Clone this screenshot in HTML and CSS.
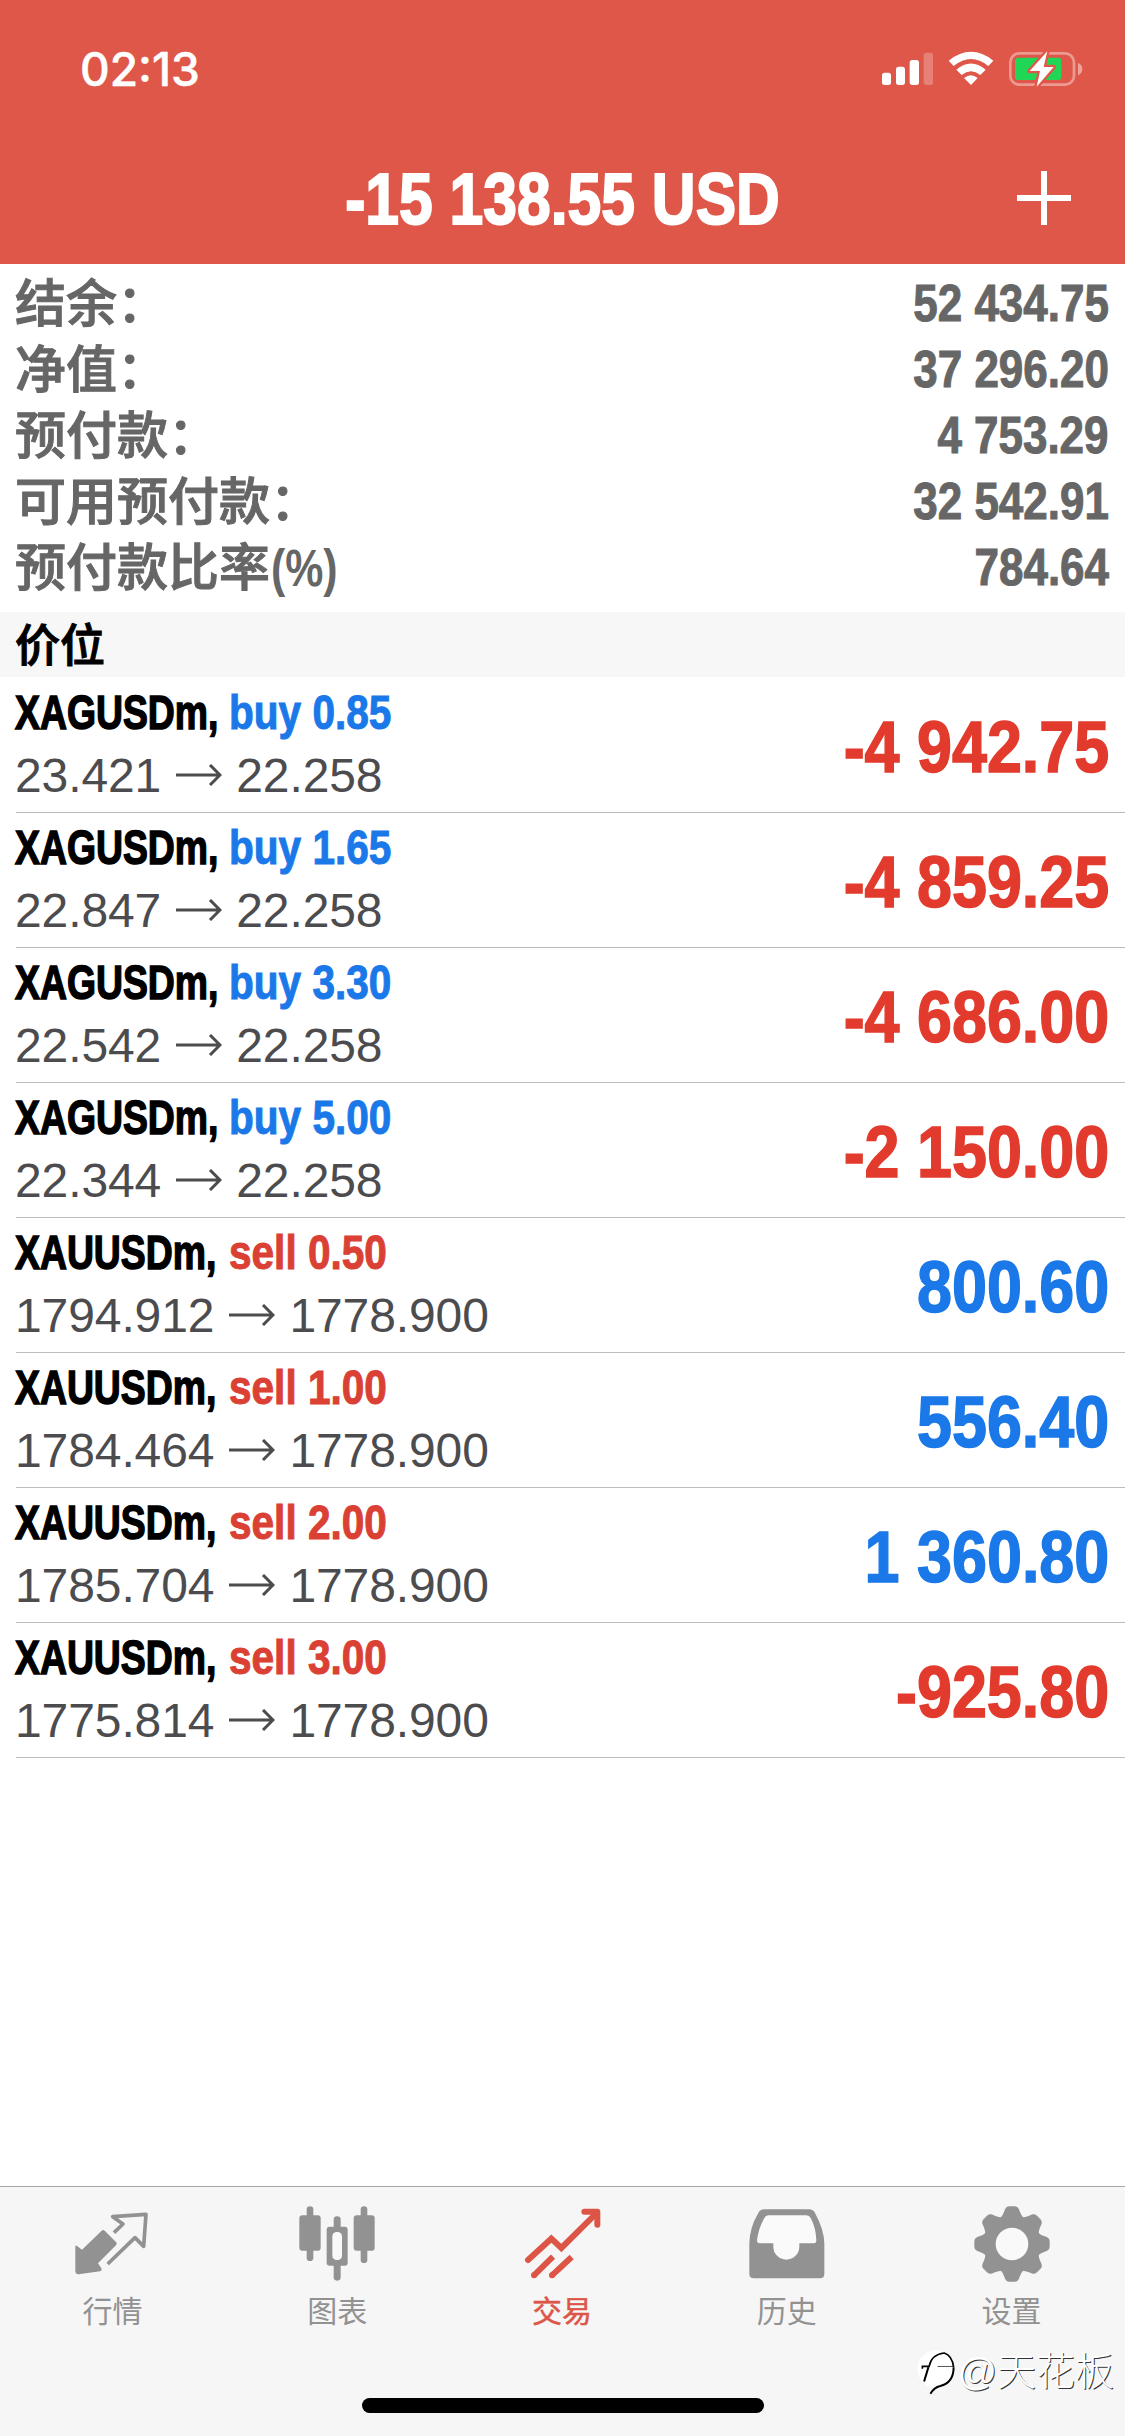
FILE: index.html
```html
<!DOCTYPE html>
<html lang="zh-CN">
<head>
    <meta charset="UTF-8">
    <meta name="viewport" content="width=device-width, initial-scale=1.0">
    <title>交易</title>
    <link rel="stylesheet" href="styles.css">
</head>
<body>
    <header class="header">
        <!-- Status bar -->
        <div class="status-bar">
            <span class="clock">02:13</span>
            <svg class="status-icons" viewBox="120 90 612 114">
                <g fill="#fff">
                    <rect x="126" y="158" width="27" height="37" rx="8"/>
                    <rect x="168" y="140" width="27" height="55" rx="8"/>
                    <rect x="209" y="120" width="28" height="75" rx="8"/>
                    <rect x="251" y="98" width="28" height="97" rx="8" opacity=".25"/>
                    <path d="M326 122Q393 69 460 122L445 138Q393 96 341 138Z"/>
                    <path d="M349 149Q393 112 437 149L421 165Q393 143 365 165Z"/>
                    <path d="M372 174Q393 158 413 174L393 195Z"/>
                </g>
                <rect x="511" y="100" width="191" height="94" rx="27" fill="none" stroke="#fff" stroke-opacity=".4" stroke-width="8"/>
                <path d="M714 128Q727 134 727 147Q727 160 714 166Z" fill="#fff" fill-opacity=".45"/>
                <rect x="525" y="113" width="139" height="67" rx="10" fill="#1fd655"/>
                <path d="M622 94L569 153H600L590 200L641 141H611Z" fill="#fff" stroke="#df5749" stroke-width="14" stroke-linejoin="round" paint-order="stroke"/>
            </svg>
        </div>
        <div class="title-bar">
            <h1>-15 138.55 USD</h1>
            <button class="add-btn">
                <svg viewBox="0 0 54 54"><path d="M27 0V54M0 27H54" stroke="#fff" stroke-width="6"/></svg>
            </button>
        </div>
    </header>

    <!-- Account summary -->
    <section class="summary">
        <div class="summary-row"><span class="label">结余：</span><span class="value">52 434.75</span></div>
        <div class="summary-row"><span class="label">净值：</span><span class="value">37 296.20</span></div>
        <div class="summary-row"><span class="label">预付款：</span><span class="value">4 753.29</span></div>
        <div class="summary-row"><span class="label">可用预付款：</span><span class="value">32 542.91</span></div>
        <div class="summary-row"><span class="label">预付款比率<span class="unit">(%)</span></span><span class="value">784.64</span></div>
    </section>

    <h2 class="section-title">价位</h2>

    <!-- Open positions -->
    <main class="positions">
        <div class="position">
            <div class="info">
                <div class="deal"><span class="symbol">XAGUSDm,</span><span class="side buy">buy 0.85</span></div>
                <div class="price">23.421<svg class="arrow" viewBox="0 0 46 22"><path d="M0 11H44M34 1L44 11L34 21"/></svg>22.258</div>
            </div>
            <div class="profit loss">-4 942.75</div>
        </div>
        <div class="position">
            <div class="info">
                <div class="deal"><span class="symbol">XAGUSDm,</span><span class="side buy">buy 1.65</span></div>
                <div class="price">22.847<svg class="arrow" viewBox="0 0 46 22"><path d="M0 11H44M34 1L44 11L34 21"/></svg>22.258</div>
            </div>
            <div class="profit loss">-4 859.25</div>
        </div>
        <div class="position">
            <div class="info">
                <div class="deal"><span class="symbol">XAGUSDm,</span><span class="side buy">buy 3.30</span></div>
                <div class="price">22.542<svg class="arrow" viewBox="0 0 46 22"><path d="M0 11H44M34 1L44 11L34 21"/></svg>22.258</div>
            </div>
            <div class="profit loss">-4 686.00</div>
        </div>
        <div class="position">
            <div class="info">
                <div class="deal"><span class="symbol">XAGUSDm,</span><span class="side buy">buy 5.00</span></div>
                <div class="price">22.344<svg class="arrow" viewBox="0 0 46 22"><path d="M0 11H44M34 1L44 11L34 21"/></svg>22.258</div>
            </div>
            <div class="profit loss">-2 150.00</div>
        </div>
        <div class="position">
            <div class="info">
                <div class="deal"><span class="symbol">XAUUSDm,</span><span class="side sell">sell 0.50</span></div>
                <div class="price">1794.912<svg class="arrow" viewBox="0 0 46 22"><path d="M0 11H44M34 1L44 11L34 21"/></svg>1778.900</div>
            </div>
            <div class="profit">800.60</div>
        </div>
        <div class="position">
            <div class="info">
                <div class="deal"><span class="symbol">XAUUSDm,</span><span class="side sell">sell 1.00</span></div>
                <div class="price">1784.464<svg class="arrow" viewBox="0 0 46 22"><path d="M0 11H44M34 1L44 11L34 21"/></svg>1778.900</div>
            </div>
            <div class="profit">556.40</div>
        </div>
        <div class="position">
            <div class="info">
                <div class="deal"><span class="symbol">XAUUSDm,</span><span class="side sell">sell 2.00</span></div>
                <div class="price">1785.704<svg class="arrow" viewBox="0 0 46 22"><path d="M0 11H44M34 1L44 11L34 21"/></svg>1778.900</div>
            </div>
            <div class="profit">1 360.80</div>
        </div>
        <div class="position">
            <div class="info">
                <div class="deal"><span class="symbol">XAUUSDm,</span><span class="side sell">sell 3.00</span></div>
                <div class="price">1775.814<svg class="arrow" viewBox="0 0 46 22"><path d="M0 11H44M34 1L44 11L34 21"/></svg>1778.900</div>
            </div>
            <div class="profit loss">-925.80</div>
        </div>
    </main>

    <!-- Bottom tabs -->
    <footer class="footer">
        <nav class="tabs">
            <a class="tab">
                <svg viewBox="0 0 240 240">
                    <path d="M10 128Q10 122 15 126L30 137L89 80Q94 76 99 81L132 114Q137 119 132 124L78 178L88 193Q91 200 84 202L20 211Q10 211 10 202Z" fill="#929292"/>
                    <path d="M126 86L153 60L122 38L222 31L215 127L189 101L107 180" fill="none" stroke="#929292" stroke-width="11" stroke-linejoin="round"/>
                </svg>
                <span>行情</span>
            </a>
            <a class="tab">
                <svg viewBox="0 0 240 240">
                    <g fill="#929292">
                        <rect x="7" y="34" width="64" height="106" rx="9"/>
                        <rect x="29" y="7" width="20" height="164" rx="10"/>
                        <rect x="170" y="34" width="63" height="106" rx="9"/>
                        <rect x="191" y="7" width="20" height="170" rx="10"/>
                        <rect x="89" y="68" width="63" height="117" rx="9"/>
                        <rect x="110" y="37" width="21" height="193" rx="10"/>
                    </g>
                    <rect x="106" y="84" width="29" height="84" rx="13" fill="#f9f9f9"/>
                </svg>
                <span>图表</span>
            </a>
            <a class="tab active">
                <svg viewBox="0 0 240 240">
                    <g fill="none" stroke="#dc5547" stroke-width="18">
                        <path d="M18 168L88 104L118 132L222 29" stroke-linecap="round" stroke-linejoin="miter"/>
                        <path d="M187 23H226V62" stroke-linecap="round" stroke-linejoin="round"/>
                        <path d="M35 215L93 158M89 215L149 159"/>
                    </g>
                    <circle cx="36" cy="214" r="9" fill="#dc5547"/>
                    <circle cx="90" cy="214" r="9" fill="#dc5547"/>
                </svg>
                <span>交易</span>
            </a>
            <a class="tab">
                <svg viewBox="0 0 240 240">
                    <path d="M52 16H186Q199 16 204 27Q232 78 232 120V210Q232 223 219 223H21Q7 223 7 210V120Q7 72 34 27Q40 16 52 16Z" fill="#929292"/>
                    <path d="M64 34H178Q187 34 191 42Q207 72 208 109Q208 118 201 118H157V128A39 39 0 0 1 79 128V118H38Q30 118 30 109Q34 75 52 42Q56 34 64 34Z" fill="#fafafa"/>
                </svg>
                <span>历史</span>
            </a>
            <a class="tab">
                <svg viewBox="0 0 240 240">
                    <defs>
                        <path id="tooth" d="M83 45Q93 34 97 22Q101 7 112 7H128Q139 7 143 22Q147 34 157 45V90H83Z"/>
                    </defs>
                    <g fill="#929292">
                        <circle cx="120" cy="120" r="85"/>
                        <use href="#tooth"/>
                        <use href="#tooth" transform="rotate(45 120 120)"/>
                        <use href="#tooth" transform="rotate(90 120 120)"/>
                        <use href="#tooth" transform="rotate(135 120 120)"/>
                        <use href="#tooth" transform="rotate(180 120 120)"/>
                        <use href="#tooth" transform="rotate(225 120 120)"/>
                        <use href="#tooth" transform="rotate(270 120 120)"/>
                        <use href="#tooth" transform="rotate(315 120 120)"/>
                    </g>
                    <circle cx="120" cy="120" r="49" fill="#f9f9f9"/>
                </svg>
                <span>设置</span>
            </a>
        </nav>
        <div class="home-indicator"></div>
        <div class="watermark">
            <svg viewBox="165 550 125 140">
                <circle cx="228" cy="610" r="56" fill="#fff"/>
                <g fill="none" stroke="#000">
                    <path d="M187 609V602H207Q214 566 252 562Q276 570 280 604" stroke-width="5"/>
                    <path d="M205 604L192 647" stroke-width="6"/>
                    <path d="M232 602H280" stroke-width="2"/>
                    <path d="M280 604Q280 650 240 660Q222 664 211 683" stroke-width="6"/>
                </g>
            </svg>
            <span>@天花板</span>
        </div>
    </footer>
</body>
</html>
```
FILE: styles.css
```css
* {
    box-sizing: border-box;
}

body {
    font-family: "Liberation Sans", "Noto Sans CJK SC", sans-serif;
    background-color: #fff;
    margin: 0;
    height: 2436px;
    display: flex;
    flex-direction: column;
}

/* Header */
.header {
    height: 264px;
    background-color: #df5749;
    color: #fff;
}

.status-bar {
    height: 132px;
    padding: 50px 41px 0 80px;
    display: flex;
    justify-content: space-between;
    align-items: flex-start;
}

.clock {
    font-family: Inter, sans-serif;
    font-size: 46px;
    font-weight: 500;
    line-height: 38px;
    -webkit-text-stroke: 0.5px #fff;
}

.status-icons {
    width: 204px;
    height: 38px;
}

.title-bar {
    height: 132px;
    padding: 0 54px;
    display: grid;
    grid-template-columns: 54px 1fr 54px;
    align-items: center;
}

.title-bar h1 {
    grid-column: 2;
    margin: 0;
    padding-top: 2px;
    font-size: 72px;
    line-height: 130px;
    text-align: center;
    white-space: nowrap;
    -webkit-text-stroke: 2px #fff;
    transform: scaleX(0.842);
}

.add-btn {
    padding: 0;
    border: none;
    background: none;
    height: 54px;
}

.add-btn svg {
    display: block;
    width: 54px;
    height: 54px;
}

/* Account summary */
.summary {
    height: 348px;
    padding: 8px 16px 0 15px;
    color: #666;
    font-size: 51px;
    font-weight: 500;
}

.summary-row {
    height: 66px;
    line-height: 66px;
    display: flex;
    justify-content: space-between;
}

.label {
    -webkit-text-stroke: 1px #666;
}

.value {
    margin-top: -1px;
    font-weight: bold;
    -webkit-text-stroke: 1px #666;
    transform: scaleX(0.862);
    transform-origin: right;
}

.unit {
    display: inline-block;
    margin-left: 1px;
    font-weight: bold;
    -webkit-text-stroke: 0;
    transform: scaleX(0.84);
    transform-origin: left;
}

.section-title {
    margin: 0;
    padding: 3px 15px 0;
    height: 65px;
    line-height: 64px;
    font-size: 45px;
    font-weight: 500;
    -webkit-text-stroke: 1px #000;
    background-color: #f7f7f7;
}

/* Positions */
.positions {
    flex: 1;
    padding-top: 1px;
}

.position {
    height: 135px;
    margin-left: 16px;
    padding-right: 16px;
    border-bottom: 1px solid #bcbcc0;
    display: flex;
    justify-content: space-between;
    align-items: center;
}

.info {
    margin-left: -1px;
    padding-bottom: 2px;
    font-size: 48px;
    line-height: 63px;
}

.deal {
    display: flex;
    font-weight: bold;
}

.symbol {
    width: 214px;
    color: #000;
    white-space: nowrap;
    -webkit-text-stroke: 1.5px #000;
    transform: scaleX(0.778);
    transform-origin: left;
}

.side {
    -webkit-text-stroke: 1px;
    transform: scaleX(0.845);
    transform-origin: left;
}

.buy {
    color: #1a78e8;
}

.sell {
    color: #da4033;
}

.price {
    color: #4c4c4f;
    letter-spacing: -0.1px;
}

.arrow {
    width: 46px;
    height: 22px;
    margin: 0 14px 0 15px;
    vertical-align: 6px;
    fill: none;
    stroke: #4c4c4f;
    stroke-width: 3;
}

.profit {
    padding-top: 3px;
    font-size: 72px;
    font-weight: bold;
    color: #1a78e8;
    -webkit-text-stroke: 1.5px;
    transform: scaleX(0.873);
    transform-origin: right;
}

.profit.loss {
    color: #e23b2d;
}

/* Bottom tabs */
.footer {
    position: relative;
    height: 250px;
    border-top: 1px solid #a7a7aa;
    background-color: #f6f6f6;
}

.tabs {
    display: flex;
    padding: 17px 1px 0 0;
}

.tab {
    flex: 1;
    display: flex;
    flex-direction: column;
    align-items: center;
    font-size: 30px;
    line-height: 44px;
    color: #929292;
}

.tab svg {
    width: 80px;
    height: 80px;
    margin-bottom: 6px;
}

.tab.active {
    color: #dc5547;
    -webkit-text-stroke: 0.5px;
}

.home-indicator {
    width: 402px;
    height: 15px;
    margin: 64px auto 0;
    border-radius: 8px;
    background-color: #000;
}

.watermark {
    position: absolute;
    right: 11px;
    bottom: 36px;
    display: flex;
    align-items: center;
    font-size: 39px;
    font-weight: 300;
    line-height: 56px;
    color: #fff;
    text-shadow: 1px 1px 0 #333;
}

.watermark svg {
    width: 42px;
    height: 47px;
}
```
